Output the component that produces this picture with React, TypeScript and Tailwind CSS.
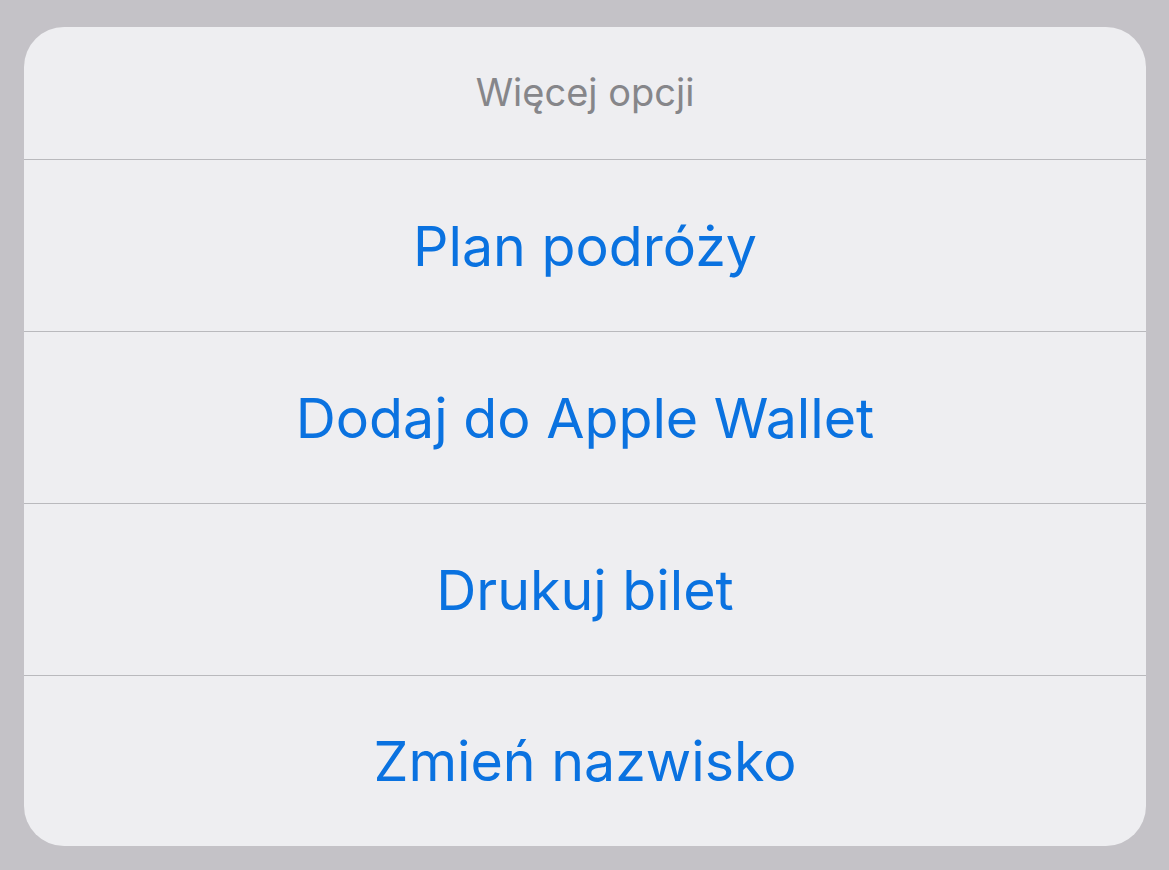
const actions = ["Plan podróży", "Dodaj do Apple Wallet", "Drukuj bilet", "Zmień nazwisko"];

export default function App() {
  return (
    <div className="min-h-[870px] w-full bg-[#c4c2c7] pl-[24px] pr-[23px] pt-[27px] font-['Inter','Noto_Sans',sans-serif]">
      <div className="flex flex-col overflow-hidden rounded-[40px] bg-[#eeeef1]">
        {/* Sheet title */}
        <div className="flex h-[133px] items-center justify-center border-b border-[#b9b9bd] pb-[2px]">
          <span className="text-[38px] text-[#86868a]">Więcej opcji</span>
        </div>

        {actions.map((label, i) => (
          <button
            key={label}
            className={
              i < actions.length - 1
                ? "flex h-[172px] items-center justify-center border-b border-[#b9b9bd] text-[55.5px] text-[#0a72e0]"
                : "flex h-[170px] items-center justify-center text-[55.5px] text-[#0a72e0]"
            }
          >
            {label}
          </button>
        ))}
      </div>
    </div>
  );
}
